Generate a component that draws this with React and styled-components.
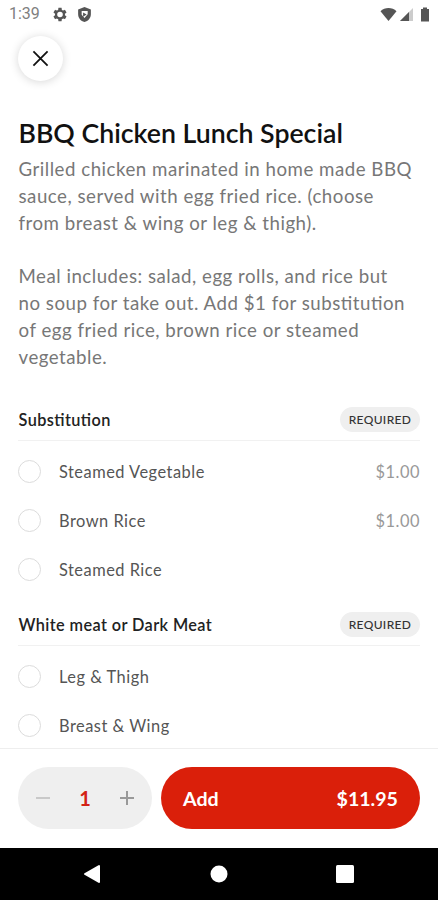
import React, { useState } from 'react';
import styled, { createGlobalStyle } from 'styled-components';

const groups = [
  {
    title: 'Substitution',
    options: [
      { name: 'Steamed Vegetable', price: '$1.00' },
      { name: 'Brown Rice', price: '$1.00' },
      { name: 'Steamed Rice' },
    ],
  },
  {
    title: 'White meat or Dark Meat',
    options: [{ name: 'Leg & Thigh' }, { name: 'Breast & Wing' }],
  },
];

const StatusBar = () => (
  <Status>
    <Clock>1:39</Clock>
    <StatusIcon $w={16} $left={12} viewBox='0 0 24 24'>
      <path
        fillRule='evenodd'
        d='M19.4 13a7.6 7.6 0 0 0 0-2l2.1-1.6c.2-.2.3-.5.1-.7l-2-3.4c-.1-.3-.4-.3-.6-.2l-2.5 1a7.3 7.3 0 0 0-1.7-1L14.4 2.4c0-.2-.2-.4-.4-.4h-4c-.2 0-.4.2-.4.4L9.2 5.1c-.6.2-1.2.6-1.7 1l-2.5-1c-.2-.1-.5 0-.6.2l-2 3.4c-.1.2-.1.5.1.7L4.6 11a7.6 7.6 0 0 0 0 2l-2.1 1.6c-.2.2-.3.5-.1.7l2 3.4c.1.3.4.3.6.2l2.5-1c.5.4 1.1.8 1.7 1l.4 2.7c0 .2.2.4.4.4h4c.2 0 .4-.2.4-.4l.4-2.7c.6-.2 1.2-.6 1.7-1l2.5 1c.2.1.5 0 .6-.2l2-3.4c.1-.2.1-.5-.1-.7zM12 16.2a4.200 4.200 0 1 1 0-8.400 4.200 4.200 0 0 1 0 8.400z'
      />
    </StatusIcon>
    <StatusIcon $w={17} $left={8} viewBox='0 0 24 24'>
      <path
        fillRule='evenodd'
        d='M12 1.5 3 5v6.5c0 5.2 3.800 9.700 9 11 5.200-1.300 9-5.800 9-11V5zM8 7h8.500v4.500L12 17l-4-4.500zM10 9v6l5-3z'
      />
    </StatusIcon>
    <Spacer />
    <StatusIcon $w={17} viewBox='0 0 17 17'>
      <path d='M8.5 15 .5 5.2C2.7 3.2 5.5 2 8.5 2s5.8 1.2 8 3.2z' />
    </StatusIcon>
    <StatusIcon $w={15} $left={2} viewBox='0 0 15 17'>
      <path d='M14 2v13H1z' opacity='.3' />
      <path d='M10 6v9H1z' />
    </StatusIcon>
    <StatusIcon $w={10} $left={6} viewBox='0 0 10 17'>
      <path d='M3 1.5h4V3h2v12.5H1V3h2z' />
    </StatusIcon>
  </Status>
);

const OptionGroup = ({ title, options }) => {
  const [selected, setSelected] = useState(null);

  return (
    <Group>
      <GroupHeader>
        <GroupTitle>{title}</GroupTitle>
        <Badge>REQUIRED</Badge>
      </GroupHeader>
      {options.map(({ name, price }) => (
        <Option key={name} onClick={() => setSelected(name)}>
          <Radio $checked={selected === name} />
          <OptionName>{name}</OptionName>
          {price && <Price>{price}</Price>}
        </Option>
      ))}
    </Group>
  );
};

const App = () => {
  const [count, setCount] = useState(1);

  return (
    <Screen>
      <GlobalStyle />
      <StatusBar />
      <Content>
        <CloseButton aria-label='Close'>
          <svg width='17' height='17' viewBox='0 0 18 18'>
            <path d='M1.5 1.5l15 15M16.5 1.5l-15 15' stroke='#111' strokeWidth='1.9' />
          </svg>
        </CloseButton>
        <Title>BBQ Chicken Lunch Special</Title>
        <Description>
          Grilled chicken marinated in home made BBQ
          <br />
          sauce, served with egg fried rice. (choose
          <br />
          from breast &amp; wing or leg &amp; thigh).
        </Description>
        <Description>
          Meal includes: salad, egg rolls, and rice but
          <br />
          no soup for take out. Add $1 for substitution
          <br />
          of egg fried rice, brown rice or steamed
          <br />
          vegetable.
        </Description>
        {groups.map((group) => (
          <OptionGroup key={group.title} {...group} />
        ))}
      </Content>
      <Footer>
        <Stepper>
          <StepButton
            $color='#c4c4c4'
            aria-label='Remove one'
            onClick={() => setCount(Math.max(1, count - 1))}
          >
            <svg width='14' height='14' viewBox='0 0 14 14'>
              <path d='M0 7h14' stroke='currentColor' strokeWidth='1.8' />
            </svg>
          </StepButton>
          <Count>{count}</Count>
          <StepButton
            $color='#999'
            aria-label='Add one'
            onClick={() => setCount(count + 1)}
          >
            <svg width='14' height='14' viewBox='0 0 14 14'>
              <path d='M0 7h14M7 0v14' stroke='currentColor' strokeWidth='2' />
            </svg>
          </StepButton>
        </Stepper>
        <AddButton>
          <span>Add</span>
          <span>${(count * 11.95).toFixed(2)}</span>
        </AddButton>
      </Footer>
      <NavBar>
        <svg width='18' height='20' viewBox='0 0 18 20'>
          <path d='M16 2v16L2 10z' fill='#fff' stroke='#fff' strokeWidth='2' strokeLinejoin='round' />
        </svg>
        <svg width='18' height='18' viewBox='0 0 18 18'>
          <circle cx='9' cy='9' r='8.5' fill='#fff' />
        </svg>
        <svg width='18' height='18' viewBox='0 0 18 18'>
          <rect width='18' height='18' rx='1.5' fill='#fff' />
        </svg>
      </NavBar>
    </Screen>
  );
};

const GlobalStyle = createGlobalStyle`
  * {
    box-sizing: border-box;
  }
  body {
    margin: 0;
    background: #fff;
    font-family: Lato, sans-serif;
    font-feature-settings: 'liga' 1;
  }
  button {
    border: 0;
    padding: 0;
    font-family: inherit;
    font-feature-settings: inherit;
    cursor: pointer;
  }
  svg {
    display: block;
    flex-shrink: 0;
  }
`;

const Screen = styled.main`
  width: 438px;
  height: 900px;
  display: flex;
  flex-direction: column;
  overflow: hidden;
  background: #fff;
`;

const Status = styled.header`
  height: 28px;
  flex-shrink: 0;
  padding: 0 8px 0 9px;
  display: flex;
  align-items: center;
`;

const Clock = styled.span`
  width: 31px;
  font-family: Roboto, sans-serif;
  font-size: 16px;
  line-height: 28px;
  color: #808080;
  white-space: nowrap;
`;

const StatusIcon = styled.svg`
  width: ${({ $w }) => $w}px;
  height: 17px;
  margin-left: ${({ $left }) => $left || 0}px;
  fill: #555;
`;

const Spacer = styled.div`
  flex: 1;
`;

const Content = styled.section`
  flex: 1;
  min-height: 0;
  padding: 8px 18px 0;
  overflow: hidden;
`;

const CloseButton = styled.button`
  width: 45px;
  height: 45px;
  border-radius: 50%;
  display: grid;
  place-items: center;
  background: #fff;
  box-shadow: 0 1px 10px rgba(0, 0, 0, 0.16);
`;

const Title = styled.h1`
  margin: 35px 0 0;
  padding-left: 0.5px;
  font-size: 26.7px;
  font-weight: 600;
  line-height: 34px;
  color: #111;
  white-space: nowrap;
`;

const Description = styled.p`
  margin: 6px 0 0;
  padding-left: 0.5px;
  font-size: 18.7px;
  line-height: 26.8px;
  letter-spacing: 0.5px;
  color: #777;
  white-space: nowrap;
  & + & {
    margin-top: 26.8px;
  }
`;

const Group = styled.section`
  margin-top: 36px;
  & + & {
    margin-top: 17px;
  }
`;

const GroupHeader = styled.div`
  height: 35px;
  margin-bottom: 6px;
  padding-bottom: 7px;
  display: flex;
  align-items: center;
  justify-content: space-between;
  border-bottom: 1px solid #f1f1f1;
`;

const GroupTitle = styled.h2`
  margin: 0;
  padding-left: 0.5px;
  font-size: 16.3px;
  font-weight: 600;
  letter-spacing: 0.4px;
  color: #222;
`;

const Badge = styled.span`
  width: 80px;
  height: 25px;
  border-radius: 13px;
  display: grid;
  place-items: center;
  background: #efefef;
  font-size: 12px;
  font-weight: 500;
  letter-spacing: 0.35px;
  color: #333;
`;

const Option = styled.div`
  height: 49px;
  display: flex;
  align-items: center;
  font-size: 16.4px;
  letter-spacing: 0.5px;
`;

const Radio = styled.span`
  width: 23px;
  height: 23px;
  border-radius: 50%;
  border: ${({ $checked }) => ($checked ? '7px solid #da1f0a' : '1px solid #dcdcdc')};
`;

const OptionName = styled.span`
  margin-left: 18px;
  color: #555;
`;

const Price = styled.span`
  margin-left: auto;
  color: #999;
`;

const Footer = styled.footer`
  height: 100px;
  flex-shrink: 0;
  padding: 18px;
  display: flex;
  gap: 9px;
  border-top: 1px solid #eee;
`;

const Stepper = styled.div`
  width: 134px;
  height: 62px;
  border-radius: 31px;
  padding: 0 18px;
  display: flex;
  align-items: center;
  justify-content: space-between;
  background: #efefef;
`;

const StepButton = styled.button`
  width: 14px;
  height: 40px;
  display: grid;
  place-items: center;
  background: none;
  color: ${({ $color }) => $color};
`;

const Count = styled.span`
  font-size: 20px;
  font-weight: 700;
  color: #d32215;
`;

const AddButton = styled.button`
  flex: 1;
  height: 62px;
  border-radius: 31px;
  padding: 0 22px;
  display: flex;
  align-items: center;
  justify-content: space-between;
  background: #da1f0a;
  color: #fff;
  font-size: 19.6px;
  font-weight: 700;
`;

const NavBar = styled.nav`
  height: 52px;
  flex-shrink: 0;
  padding: 0 84px 0 83px;
  display: flex;
  align-items: center;
  justify-content: space-between;
  background: #000;
`;

export default App;
